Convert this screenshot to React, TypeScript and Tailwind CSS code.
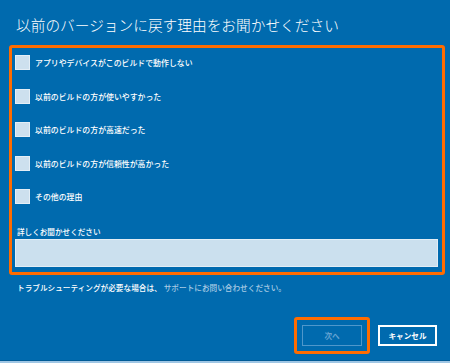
const reasons = [
  "アプリやデバイスがこのビルドで動作しない",
  "以前のビルドの方が使いやすかった",
  "以前のビルドの方が高速だった",
  "以前のビルドの方が信頼性が高かった",
  "その他の理由",
];

const font = { fontFamily: '"Noto Sans CJK JP", "Noto Sans", sans-serif' };

const App = () => {
  return (
    <div
      className="relative w-[450px] h-[363px] bg-[#006aae] flex flex-col overflow-hidden text-white"
      style={font}
    >
      <h1 className="ml-[16px] mt-[15px] text-[14.7px] leading-[20px] font-light">
        以前のバージョンに戻す理由をお聞かせください
      </h1>

      <div className="mt-[10px] ml-[9px] w-[436px] h-[230px] border-[3px] border-[#ff6c00] rounded-[3px] pl-[3px] pt-[7px] flex flex-col">
        <div className="flex flex-col gap-[18.5px]">
          {reasons.map((r) => (
            <label key={r} className="flex items-center gap-[5px] h-[15px]">
              <span className="w-[15px] h-[15px] bg-[#cde0ee] border border-[#e4eef6] shrink-0" />
              <span className="text-[7.9px] leading-[15px] font-medium">{r}</span>
            </label>
          ))}
        </div>
        <p className="mt-[23px] ml-[2px] text-[7.6px] leading-[10px] font-medium">
          詳しくお聞かせください
        </p>
        <div className="mt-[2px] w-[423px] h-[28px] bg-[#cbe0ee] border border-[#e2edf5]" />
      </div>

      <p className="mt-[8px] ml-[17px] text-[7.65px] leading-[10px] font-medium">
        トラブルシューティングが必要な場合は、
        <span className="ml-[2px] text-[#a9cae4]">サポートにお問い合わせください。</span>
      </p>

      <div className="mt-[24px] mr-[13px] flex justify-end items-center gap-[8px]">
        <div className="border-[3px] border-[#ff6c00] rounded-[3px] p-[5px]">
          <button className="w-[60px] h-[21px] border border-[#4f97cb] text-[#65a3d2] text-[7.6px] font-bold flex items-center justify-center">
            次へ
          </button>
        </div>
        <button className="w-[59px] h-[21px] border-2 border-white text-white text-[7.6px] font-bold flex items-center justify-center">
          キャンセル
        </button>
      </div>

      <div className="absolute left-0 right-0 bottom-0 h-[2px] bg-[#9fc6e4]" />
      <div className="absolute left-0 right-0 bottom-[2px] h-[1px] bg-[#005a96]" />
    </div>
  );
};

export default App;
